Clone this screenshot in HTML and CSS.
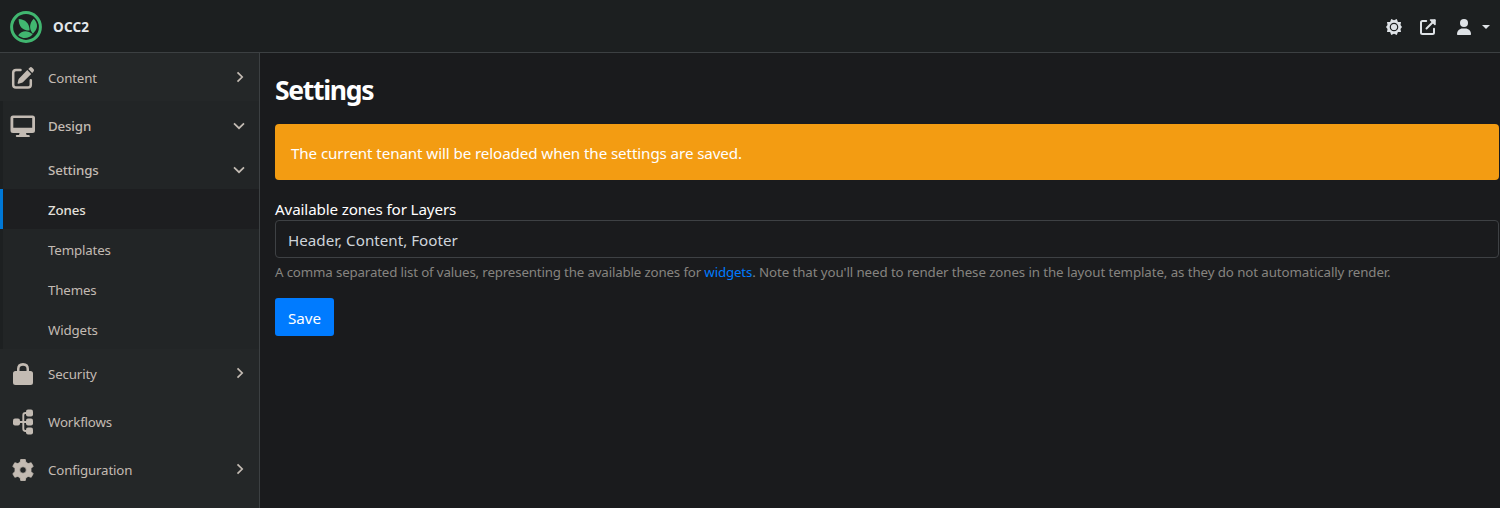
FILE: index.html
```html
<!DOCTYPE html>
<html lang="en">
<head>
<meta charset="utf-8">
<title>Settings - OCC2</title>
<link rel="stylesheet" href="styles.css">
</head>
<body>
<header class="topbar">
  <a class="brand">
    <svg class="logo" viewBox="0 0 32 32"><circle cx="16" cy="16" r="14.400" fill="none" stroke="#41b670" stroke-width="3"/><g fill="#41b670"><path d="M8.700 8c6.500.3 10.900 4.200 10.900 11.600C12.300 19.700 8.500 15 8.700 8z"/><path d="M23.700 7.800c4.700 4.700 4.500 10.200-.9 14.900-3.900-5-3.500-10.200.9-14.900z"/><path d="M8.200 24.200c3.500-5 9.400-5.500 14.500-.9-3.900 4.700-10.500 4.900-14.500.9z"/></g></svg>
    <span class="brand-name">OCC2</span>
  </a>
  <nav class="tools">
    <svg class="sun" viewBox="0 0 16 16"><path fill="#dee2e6" fill-rule="evenodd" d="M8 1.300 10.800 0l1.100 3.100L15 2.900l-.5 3L16 8l-1.500 2.100.5 3-3.100-.2-1.100 3.100L8 14.700 5.200 16l-1.100-3.100-3.100.2.500-3L0 8l1.500-2.100-.5-3 3.100.2L5.200 0zM8 3.700a4.300 4.300 0 1 0 0 8.600 4.300 4.300 0 0 0 0-8.600z"/><circle cx="8" cy="8" r="3.100" fill="#dee2e6"/></svg>
    <svg class="external" viewBox="0 0 16 16" fill="none" stroke="#dee2e6" stroke-width="2" stroke-linecap="round" stroke-linejoin="round"><path d="M6.200 2H2.500Q1 2 1 3.500v10Q1 15 2.500 15h10q1.500 0 1.500-1.500V9.800M6.500 9.500 14.500 1.500"/><path d="M10.500 1H15v4.500z" fill="#dee2e6" stroke-width="1.500"/></svg>
    <svg class="user" viewBox="0 0 14 16" fill="#dee2e6"><circle cx="7" cy="4" r="4"/><path d="M0 15.300C0 11.700 2.500 9.500 5.600 9.500h2.800c3.100 0 5.600 2.200 5.600 5.800 0 .4-.3.700-.7.700H.7c-.4 0-.7-.3-.7-.7z"/></svg>
    <span class="caret"></span>
  </nav>
</header>
<div class="layout">
  <aside class="sidebar">
    <a class="item"><span class="icon"><svg width="24" height="24" viewBox="0 0 24 24"><path fill="none" stroke="#c3bbb3" stroke-width="2.500" stroke-linecap="round" d="M9.500 4H5Q2.200 4 2.200 6.800v12q0 2.800 2.800 2.800h12q2.800 0 2.800-2.800v-4.500"/><path fill="#c3bbb3" d="m16.300 4 3.900 3.900-8.300 8.300q-.4.400-1 .6l-3.500.9q-1 .2-.8-.8l.9-3.500q.2-.6.600-1zM17.300 3l1.300-1.300q1.300-1.200 2.600 0L22.500 3q1.200 1.300 0 2.600l-1.300 1.300z"/></svg></span><span class="text">Content</span><svg class="chevron" width="8" height="12" viewBox="0 0 8 12"><path d="M1.500 1.300 6.200 6 1.500 10.700"/></svg></a>
    <div class="group">
      <a class="item"><span class="icon"><svg width="26" height="24" viewBox="0 0 26 24"><path fill="#c3bbb3" fill-rule="evenodd" d="M3 1.500h19.500q2.500 0 2.500 2.500v12.500q0 2.500-2.500 2.500H16l.6 2h2q1.200 0 1.200 1.200T18.600 23H7Q5.800 23 5.800 21.900T7 21h2l.6-2H3Q.5 19 .5 16.500V4Q.5 1.500 3 1.500zM3.300 4v9.700h18.900V4z"/></svg></span><span class="text medium">Design</span><svg class="chevron down" width="12" height="8" viewBox="0 0 12 8"><path d="M1 1.300 6 6.200 11 1.300"/></svg></a>
      <a class="item sub"><span class="text medium">Settings</span><svg class="chevron down" width="12" height="8" viewBox="0 0 12 8"><path d="M1 1.300 6 6.200 11 1.300"/></svg></a>
      <a class="item sub active"><span class="text medium">Zones</span></a>
      <a class="item sub"><span class="text">Templates</span></a>
      <a class="item sub"><span class="text">Themes</span></a>
      <a class="item sub"><span class="text">Widgets</span></a>
    </div>
    <a class="item"><span class="icon"><svg width="20" height="22" viewBox="0 0 20 22"><path fill="#c3bbb3" fill-rule="evenodd" d="M4 8V6q0-6 6-6t6 6v2h1.500Q20 8 20 10.500v9q0 2.500-2.500 2.500h-15Q0 22 0 19.500v-9Q0 8 2.500 8zM6.500 8h7V6q0-3.300-3.500-3.300T6.500 6z"/></svg></span><span class="text">Security</span><svg class="chevron" width="8" height="12" viewBox="0 0 8 12"><path d="M1.500 1.300 6.200 6 1.500 10.700"/></svg></a>
    <a class="item"><span class="icon"><svg width="20" height="26" viewBox="0 0 20 26"><path fill="none" stroke="#c3bbb3" stroke-width="1.900" d="M4 13h12M15 4h-2.500Q10.300 4 10.300 6.200v13.600q0 2.200 2.200 2.200H15"/><g fill="#c3bbb3"><rect x="0" y="9.500" width="7" height="7" rx="2"/><rect x="13" y=".5" width="7" height="7" rx="2"/><rect x="13" y="9.500" width="7" height="7" rx="2"/><rect x="13" y="18.500" width="7" height="7" rx="2"/></g></svg></span><span class="text">Workflows</span></a>
    <a class="item"><span class="icon"><svg width="22" height="22" viewBox="0 0 22 22"><path fill="#c3bbb3" fill-rule="evenodd" d="M8.800.3h4.400l.7 3 2.300 1.300 3-.9 2 3.600-2.200 2.200v3l2.200 2.200-2 3.600-3-.9-2.300 1.300-.7 3H8.800l-.7-3-2.300-1.300-3 .9-2-3.600L3 12.500v-3L.8 7.300l2-3.600 3 .9 2.300-1.300zM11 7.700a3.300 3.300 0 1 0 0 6.600 3.300 3.300 0 0 0 0-6.600z" stroke="#c3bbb3" stroke-width=".8" stroke-linejoin="round"/></svg></span><span class="text">Configuration</span><svg class="chevron" width="8" height="12" viewBox="0 0 8 12"><path d="M1.500 1.300 6.200 6 1.500 10.700"/></svg></a>
  </aside>
  <main class="content">
    <h1 class="title">Settings</h1>
    <div class="alert">The current tenant will be reloaded when the settings are saved.</div>
    <label class="label" for="zones">Available zones for Layers</label>
    <input class="field" id="zones" type="text" value="Header, Content, Footer">
    <p class="hint"><span class="hint-lead">A comma separated list of values, representing the available zones for <a class="link">widgets</a></span>. Note that you'll need to render these zones in the layout template, as they do not automatically render.</p>
    <button class="save">Save</button>
  </main>
</div>
</body>
</html>
```
FILE: styles.css
```css
* { box-sizing: border-box; }
body {
  margin: 0;
  height: 508px;
  overflow: hidden;
  display: flex;
  flex-direction: column;
  background: #1a1b1d;
  color: #fff;
  font-family: "Segoe UI", "Noto Sans", sans-serif;
  font-size: 15.2px;
}
svg { display: block; flex: none; }
.topbar {
  height: 53px;
  flex: none;
  display: flex;
  align-items: center;
  justify-content: space-between;
  padding: 1px 10px 0 10px;
  background: #1c1f20;
  border-bottom: 1px solid #3c4042;
}
.brand { display: flex; align-items: center; gap: 11px; }
.logo { width: 32px; height: 32px; }
.brand-name { font-size: 13.5px; font-weight: 700; letter-spacing: .2px; color: #e3e7ea; }
.tools { display: flex; align-items: center; }
.sun, .external { width: 16px; height: 16px; }
.external { margin-left: 18px; }
.user { width: 14px; height: 16px; margin-left: 21px; }
.caret {
  margin-left: 11px;
  border: 4px solid transparent;
  border-top-color: #dee2e6;
  border-bottom: 0;
}
.layout { flex: 1; display: flex; min-height: 0; }
.sidebar {
  width: 260px;
  flex: none;
  background: #242728;
  border-right: 1px solid #3c4042;
}
.item {
  height: 48px;
  display: flex;
  align-items: center;
  padding-top: 2px;
  padding-right: 15.5px;
  color: #c3bbb3;
  font-size: 13.3px;
  letter-spacing: -.15px;
}
.icon { width: 45px; display: flex; justify-content: center; flex: none; }
.text { margin-left: 3px; flex: 1; }
.medium { font-weight: 500; }
.group { background: #222526; border-left: 3px solid #1d2021; }
.group .icon { margin-left: -3px; }
.sub { height: 40px; padding-left: 42px; }
.active { background: #1d1e20; color: #e4e0dc; margin-left: -3px; border-left: 3px solid #0078d7; }
.chevron { fill: none; stroke: #c3bbb3; stroke-width: 1.7; margin-bottom: 2px; }
.chevron.down { margin: 0 -1px 0 0; }
.content { flex: 1; min-width: 0; padding: 20px 1px 0 15px; }
.title { margin: 0; height: 34px; line-height: 34px; font-size: 26.5px; font-weight: 700; letter-spacing: -1.3px; }
.alert {
  height: 56px;
  margin-top: 17px;
  padding: 2px 16px 0;
  display: flex;
  align-items: center;
  border-radius: 4px;
  background: #f39c12;
  letter-spacing: -.11px;
}
.label { display: block; height: 24px; line-height: 24px; margin-top: 16px; padding-top: 1px; letter-spacing: -.13px; }
.field {
  display: block;
  width: 100%;
  height: 38px;
  padding: 2px 12px 0;
  border: 1px solid #3e4144;
  border-radius: 4px;
  background: transparent;
  color: #ced4da;
  font: inherit;
}
.hint {
  margin: 4px 0 0;
  height: 20px;
  line-height: 20px;
  font-size: 13.3px;
  letter-spacing: -.09px;
  color: #868480;
  white-space: nowrap;
}
.hint-lead { letter-spacing: -.155px; }
.link { color: #007bff; }
.save {
  display: block;
  margin-top: 16px;
  width: 59px;
  height: 38px;
  padding: 2px 0 0;
  border: 0;
  border-radius: 3px;
  background: #007bff;
  color: #fff;
  font: inherit;
}
```
